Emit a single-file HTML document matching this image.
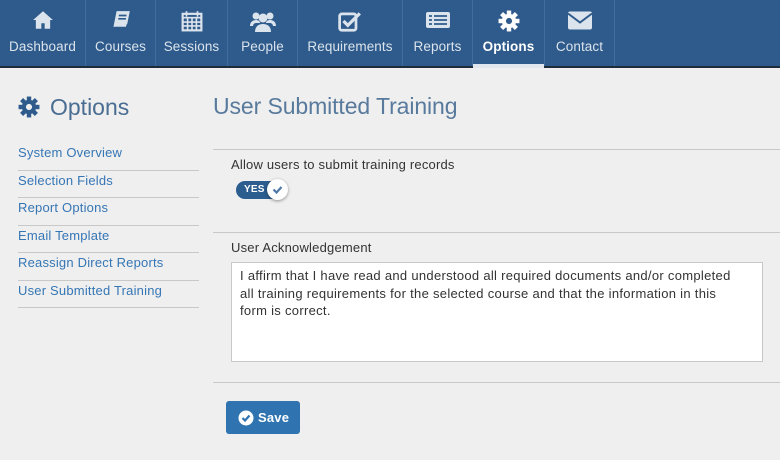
<!DOCTYPE html>
<html><head><style>
*{box-sizing:border-box;margin:0;padding:0}
body{width:780px;height:460px;overflow:hidden;background:#efefef;font-family:"Liberation Sans",sans-serif;position:relative;letter-spacing:0.2px}
.nav{position:absolute;left:0;top:0;width:780px;height:68px;background:#2e5b8b;border-bottom:2px solid #1d2b3a}
.it{position:absolute;top:0;height:66px;border-right:1px solid #3f6d9c;color:#dbe3ec;font-size:13.5px;text-align:center;letter-spacing:0.1px}
.it span{position:absolute;left:0;right:0;top:39px}
.it svg{position:absolute;top:10px;left:50%;transform:translateX(-50%)}
.act{color:#fff;font-weight:bold}
.act:after{content:"";position:absolute;left:0;right:0;bottom:-2px;height:4px;background:#dfe6ee}
.side{position:absolute;left:18px;top:92px;width:181px}
.side h1{font-weight:normal;font-size:23px;color:#4a6d92;height:56px;padding-left:32px;position:relative;line-height:30px;letter-spacing:0}
.side a{display:block;color:#3576b5;font-size:13px;height:27.5px;line-height:20px;border-bottom:1px solid #c8c8c8}
.main h2{position:absolute;left:213px;top:93px;font-weight:normal;font-size:23px;color:#587a9c;letter-spacing:-0.1px}
.hr{position:absolute;left:213px;width:567px;height:1px;background:#c8c8c8}
.lbl{position:absolute;left:231px;font-size:13px;color:#333}
.ta{position:absolute;left:231px;top:262px;width:532px;height:100px;background:#fff;border:1px solid #c8c8c8;font-size:13px;color:#333;padding:4px 8px;line-height:17.5px;letter-spacing:0.3px;white-space:nowrap}
.btn{position:absolute;left:226px;top:401px;width:74px;height:33px;background:#2f74b0;border-radius:3px;color:#fff;font-weight:bold;font-size:13px;line-height:33px;padding-left:32px}
</style></head><body>
<div class="nav">
<div class="it" style="left:0;width:86px"><svg width="22" height="20" viewBox="0 0 20 18"><path d="M10 1L1 9h2.5v8h5v-5h3v5h5V9H19z" fill="#dbe3ec"/></svg><span>Dashboard</span></div>
<div class="it" style="left:86px;width:70px"><svg width="20" height="22" viewBox="0 0 18 20"><path d="M5 1h12l-3 15H2z" fill="#dbe3ec"/><path d="M2 16h12l1-3" stroke="#2e5b8b" stroke-width="1.5" fill="none"/><path d="M7 5h7M6.5 8h7" stroke="#2e5b8b" stroke-width="1.5"/></svg><span>Courses</span></div>
<div class="it" style="left:156px;width:72px"><svg width="22" height="22" viewBox="0 0 20 20"><rect x="1.5" y="3.5" width="17" height="15" fill="none" stroke="#dbe3ec" stroke-width="2"/><path d="M1.5 7h17M5 1v5M15 1v5M6 7v11M10 7v11M14 7v11M1.5 11h17M1.5 14.5h17" stroke="#dbe3ec" stroke-width="1.5"/></svg><span>Sessions</span></div>
<div class="it" style="left:228px;width:70px"><svg width="28" height="24" viewBox="0 0 28 22"><circle cx="7" cy="5" r="3.5" fill="#dbe3ec"/><circle cx="21" cy="5" r="3.5" fill="#dbe3ec"/><circle cx="14" cy="7" r="4.5" fill="#dbe3ec"/><path d="M1 15c0-5 4-6 6-6s4 1 4 3H7c-2 0-3 2-3 3zM27 15c0-5-4-6-6-6s-4 1-4 3h4c2 0 3 2 3 3zM6 21c0-6 4-8 8-8s8 2 8 8z" fill="#dbe3ec"/></svg><span>People</span></div>
<div class="it" style="left:298px;width:105px"><svg width="24" height="22" viewBox="0 0 22 20"><rect x="1.5" y="3.5" width="15" height="15" rx="2" fill="none" stroke="#dbe3ec" stroke-width="2.5"/><path d="M5 10l4 4 11-11" stroke="#dbe3ec" stroke-width="3" fill="none"/></svg><span>Requirements</span></div>
<div class="it" style="left:403px;width:70px"><svg width="26" height="20" viewBox="0 0 26 18"><rect x="1" y="1" width="24" height="16" rx="2" fill="#dbe3ec"/><path d="M4 5h3M4 9h3M4 13h3M9 5h13M9 9h13M9 13h13" stroke="#2e5b8b" stroke-width="1.8"/></svg><span>Reports</span></div>
<div class="it act" style="left:473px;width:72px"><svg width="22" height="22" viewBox="0 0 20 20"><g fill="#fff"><circle cx="10" cy="10" r="6.5"/><rect x="8" y="0.5" width="4" height="19"/><rect x="0.5" y="8" width="19" height="4"/><rect x="8" y="0.5" width="4" height="19" transform="rotate(45 10 10)"/><rect x="8" y="0.5" width="4" height="19" transform="rotate(-45 10 10)"/></g><circle cx="10" cy="10" r="2.8" fill="#2e5b8b"/></svg><span>Options</span></div>
<div class="it" style="left:545px;width:70px"><svg width="26" height="21" viewBox="0 0 26 20"><rect x="1" y="1" width="24" height="18" rx="2" fill="#dbe3ec"/><path d="M1 3l12 9 12-9" stroke="#2e5b8b" stroke-width="2" fill="none"/></svg><span>Contact</span></div>
</div>
<div class="side">
<h1><svg style="position:absolute;left:0;top:4px" width="22" height="22" viewBox="0 0 20 20"><g fill="#2e5b8b"><circle cx="10" cy="10" r="6.5"/><rect x="8" y="0.5" width="4" height="19"/><rect x="0.5" y="8" width="19" height="4"/><rect x="8" y="0.5" width="4" height="19" transform="rotate(45 10 10)"/><rect x="8" y="0.5" width="4" height="19" transform="rotate(-45 10 10)"/></g><circle cx="10" cy="10" r="2.8" fill="#efefef"/></svg>Options</h1>
<div style="margin-top:-5px">
<a>System Overview</a><a>Selection Fields</a><a>Report Options</a><a>Email Template</a><a>Reassign Direct Reports</a><a>User Submitted Training</a>
</div></div>
<div class="main"><h2>User Submitted Training</h2></div>
<div class="hr" style="top:149px"></div>
<div class="lbl" style="top:157px">Allow users to submit training records</div>
<div style="position:absolute;left:236px;top:181px;width:50px;height:18px;border-radius:9px;background:#2b5d8f;color:#fff;font-size:10px;font-weight:bold;line-height:18px;padding-left:8px">YES</div>
<div style="position:absolute;left:267px;top:179px;width:21px;height:21px;border-radius:50%;background:#fff;box-shadow:0 1px 3px rgba(0,0,0,.4)"><svg width="21" height="21" viewBox="0 0 21 21"><path d="M6.5 10.5l3 3 5-5.5" stroke="#4f79a6" stroke-width="2.2" fill="none"/></svg></div>
<div class="hr" style="top:232px"></div>
<div class="lbl" style="top:240px">User Acknowledgement</div>
<div class="ta">I affirm that I have read and understood all required documents and/or completed<br>all training requirements for the selected course and that the information in this<br>form is correct.</div>
<div class="hr" style="top:382px"></div>
<div class="btn"><svg style="position:absolute;left:12px;top:9px" width="16" height="16" viewBox="0 0 16 16"><circle cx="8" cy="8" r="7.5" fill="#fff"/><path d="M4.5 8l2.5 2.5 4.5-5" stroke="#2f74b0" stroke-width="2.2" fill="none"/></svg>Save</div>
</body></html>
